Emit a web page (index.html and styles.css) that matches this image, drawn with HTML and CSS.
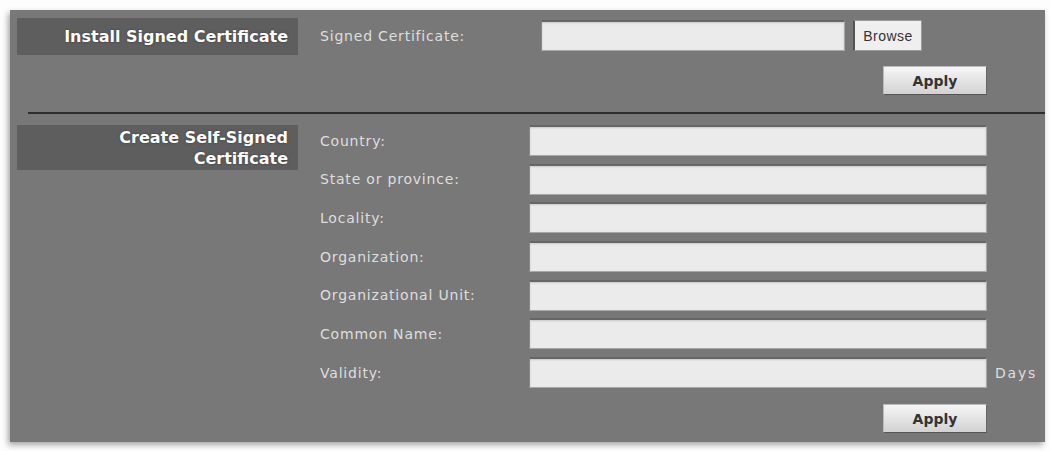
FILE: index.html
```html
<!DOCTYPE html>
<html lang="en">
<head>
  <meta charset="UTF-8" />
  <title>Certificate Settings</title>
  <link rel="stylesheet" href="styles.css">
</head>
<body>
  <div class="panel">

    <!-- Install signed certificate -->
    <div class="block">
      <div class="block-title">Install Signed Certificate</div>
      <div class="block-body">
        <div class="upload-row">
          <label class="upload-label">Signed Certificate:</label>
          <input type="text" class="field upload-field">
          <button class="browse">Browse</button>
        </div>
        <div class="actions">
          <button class="apply">Apply</button>
        </div>
      </div>
    </div>

    <div class="divider"></div>

    <!-- Self-signed certificate form -->
    <div class="block block-second">
      <div class="block-title two-line">Create Self-Signed<br>Certificate</div>
      <div class="block-body">
        <div class="form-grid">
          <label>Country:</label>
          <input type="text" class="field">
          <span></span>

          <label>State or province:</label>
          <input type="text" class="field">
          <span></span>

          <label>Locality:</label>
          <input type="text" class="field">
          <span></span>

          <label>Organization:</label>
          <input type="text" class="field">
          <span></span>

          <label>Organizational Unit:</label>
          <input type="text" class="field">
          <span></span>

          <label>Common Name:</label>
          <input type="text" class="field">
          <span></span>

          <label>Validity:</label>
          <input type="text" class="field">
          <span class="suffix">Days</span>
        </div>
        <div class="actions actions-bottom">
          <button class="apply">Apply</button>
        </div>
      </div>
    </div>

  </div>
</body>
</html>
```

FILE: styles.css
```css
* {
  box-sizing: border-box;
  margin: 0;
  padding: 0;
}

body {
  background: #fdfdfd;
  font-family: 'DejaVu Sans', Verdana, sans-serif;
}

.panel {
  margin: 10px 5px 9px 10px;
  width: 1035px;
  height: 432px;
  background: #787878;
  padding: 8px 0 0 7px;
  box-shadow: -2px 3px 6px rgba(0, 0, 0, 0.35);
}

.block {
  display: flex;
  align-items: flex-start;
}

.block-title {
  flex: none;
  width: 281px;
  height: 37px;
  line-height: 37px;
  padding-right: 10px;
  background: #5e5e5e;
  color: #fff;
  font-weight: bold;
  font-size: 16px;
  text-align: right;
  text-shadow: 0 0 2px rgba(0, 0, 0, 0.5);
}

.block-title.two-line {
  height: 45px;
  line-height: 21px;
  padding-top: 2px;
}

.block-body {
  flex: none;
  width: 667px;
  margin-left: 22px;
  color: #dedede;
  font-size: 14px;
  letter-spacing: 0.8px;
}

.upload-row {
  display: flex;
  align-items: center;
  margin-top: 2px;
}

.upload-label {
  width: 221px;
}

.field {
  height: 31px;
  background: #ebebeb;
  border: 1px solid #a8a8a8;
  border-top: 2px solid #666;
  border-left-color: #888;
  box-shadow: inset 0 1px 2px rgba(0, 0, 0, 0.15);
  outline: none;
}

.upload-field {
  width: 304px;
}

.browse {
  margin-left: 8px;
  width: 69px;
  height: 31px;
  background: #efefef;
  border: 1px solid #9a9a9a;
  border-left: 2px solid #555;
  color: #333;
  font-family: 'Liberation Sans', Arial, sans-serif;
  font-size: 14px;
  letter-spacing: 0.5px;
}

.actions {
  display: flex;
  justify-content: flex-end;
  margin-top: 15px;
}

.apply {
  width: 104px;
  height: 29px;
  background: linear-gradient(#f6f6f6, #d2d2d2);
  border: 1px solid #bbb;
  border-right-color: #666;
  border-bottom-color: #555;
  color: #333;
  font-family: 'DejaVu Sans', Verdana, sans-serif;
  font-weight: bold;
  font-size: 14px;
  letter-spacing: 0;
}

.divider {
  margin: 17px 0 0 11px;
  height: 2px;
  background: #2e2e2e;
}

.block-second {
  margin-top: 11px;
}

.form-grid {
  display: grid;
  grid-template-columns: 209px 458px auto;
  row-gap: 7.7px;
  align-items: center;
}

.suffix {
  margin-left: 8px;
  white-space: nowrap;
  letter-spacing: 1.8px;
}

.actions-bottom {
  margin-top: 16px;
}
```
